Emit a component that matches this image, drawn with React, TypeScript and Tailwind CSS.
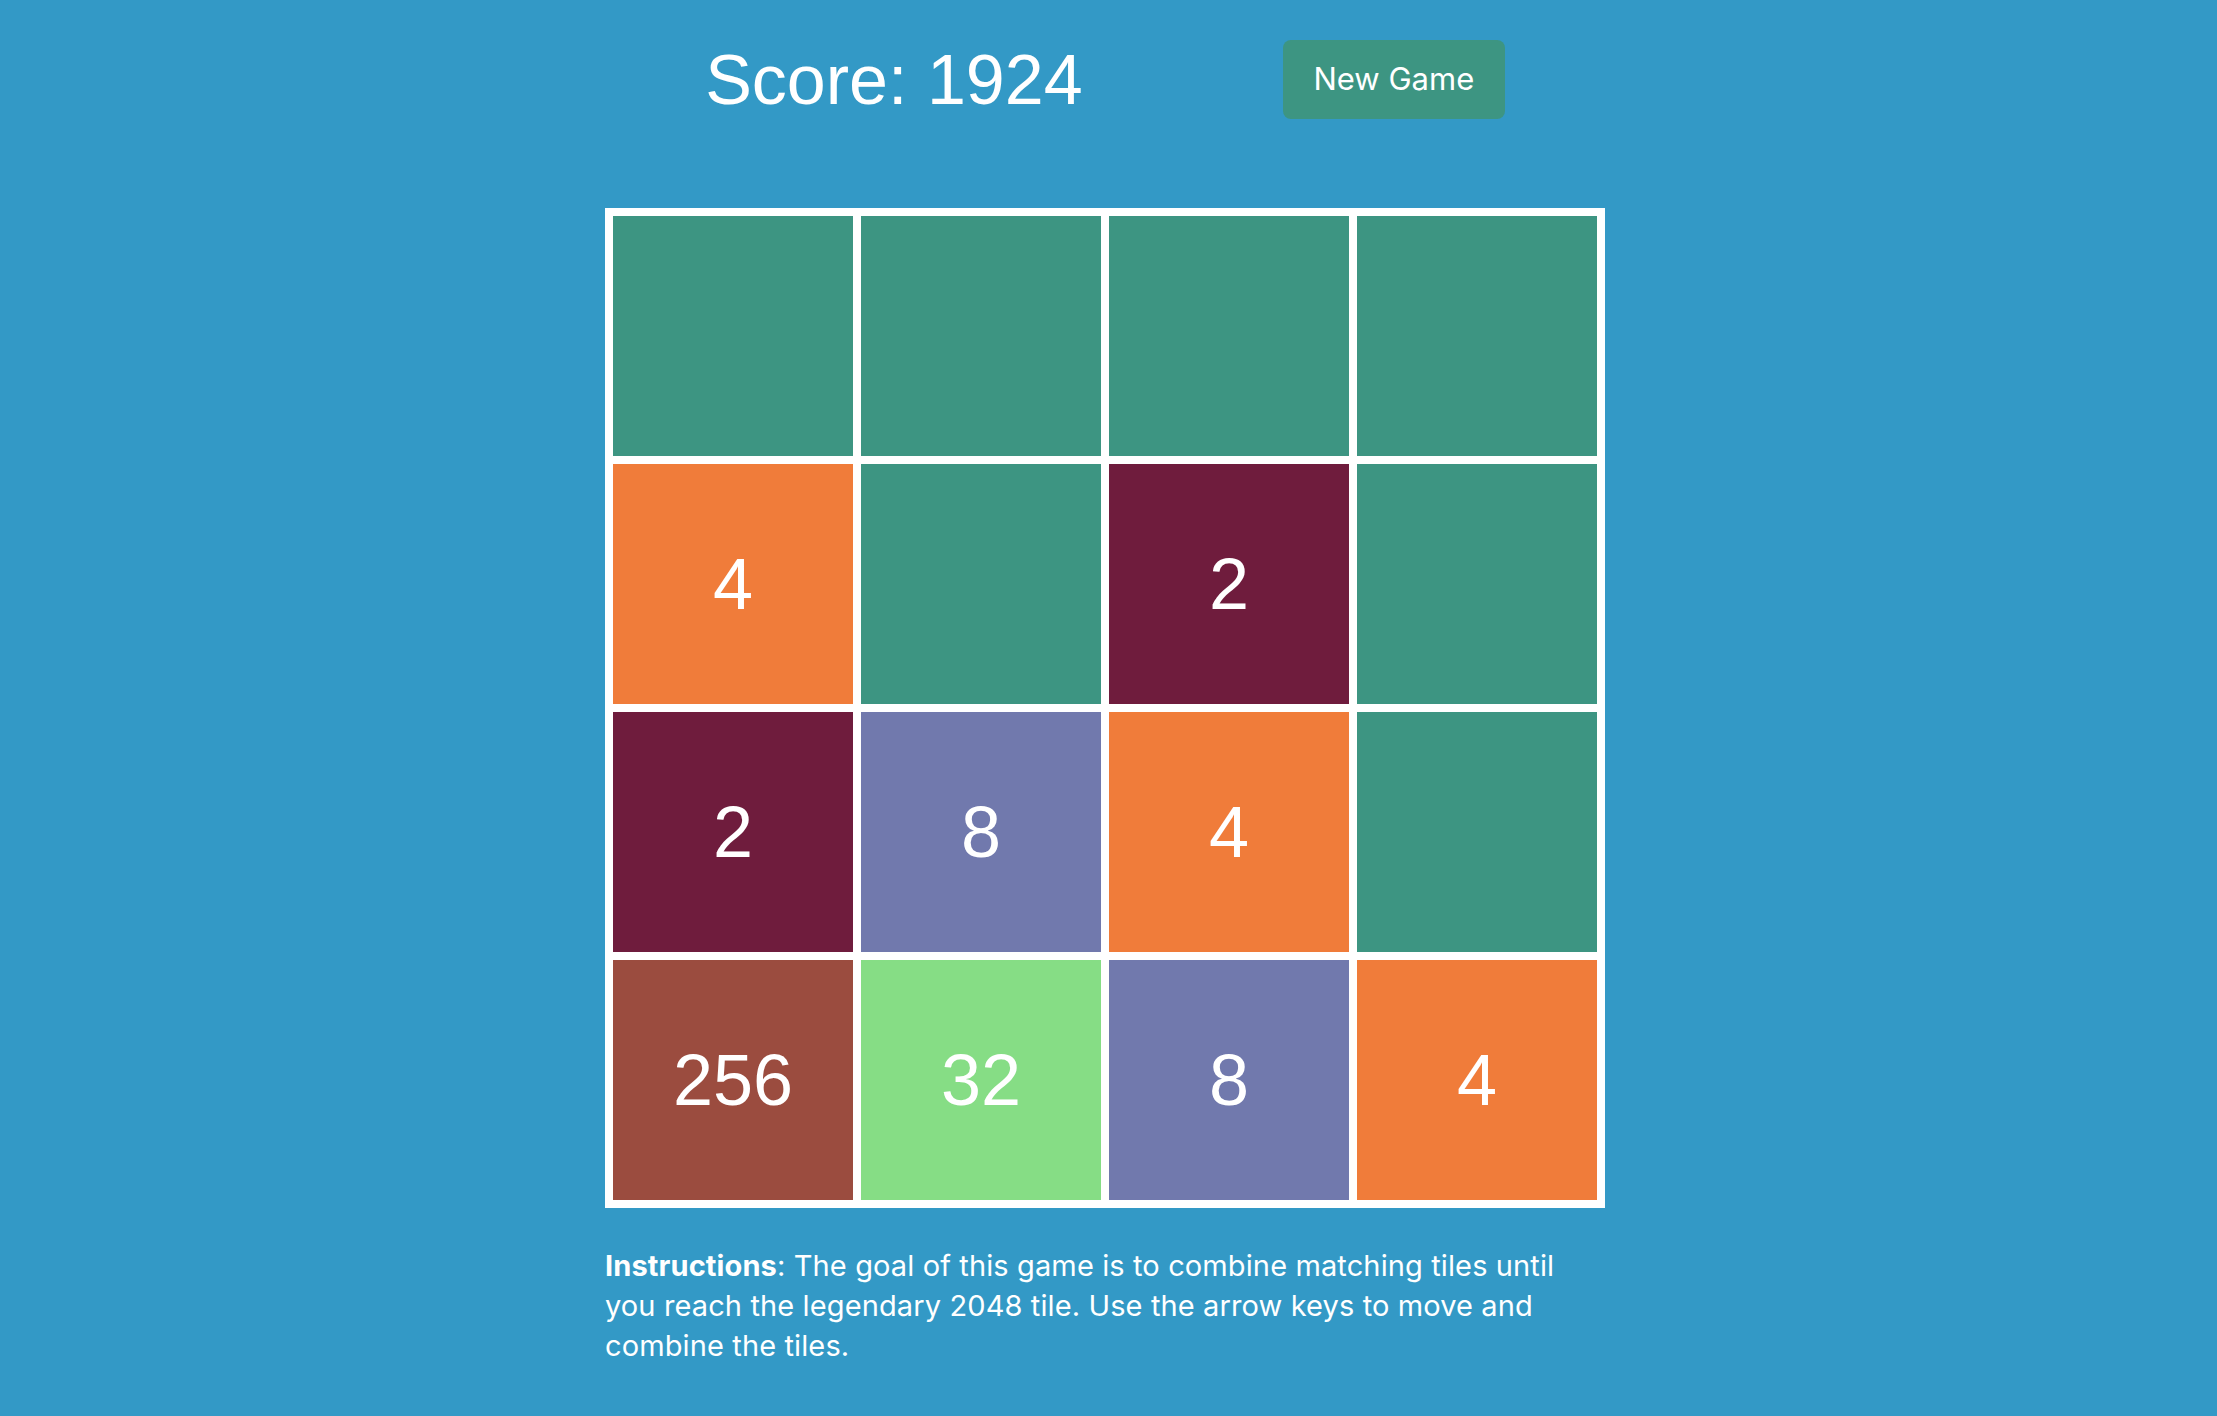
import React from "react";

// tile colours by value, 0 = empty cell
const tileColors: Record<number, string> = {
  0: "bg-[#3d9582]",
  2: "bg-[#6f1c3d]",
  4: "bg-[#f07c3a]",
  8: "bg-[#7179ad]",
  32: "bg-[#86dd85]",
  256: "bg-[#9b4c3f]",
};

const board: number[][] = [
  [0, 0, 0, 0],
  [4, 0, 2, 0],
  [2, 8, 4, 0],
  [256, 32, 8, 4],
];

function Tile({ value }: { value: number }) {
  return (
    <div
      className={`${tileColors[value]} h-[240px] flex items-center justify-center text-white text-[72px] leading-none font-['Liberation_Sans',Arial,sans-serif]`}
    >
      {value > 0 ? value : ""}
    </div>
  );
}

export default function App() {
  const score = 1924;

  return (
    <div className="min-h-screen bg-[#3399c6] flex flex-col items-center pr-[7px] pb-10">
      {/* Header */}
      <div className="w-[1000px] h-[159px] flex justify-around items-center">
        <h1 className="text-white text-[70px] leading-none font-['Liberation_Sans',Arial,sans-serif]">
          Score: {score}
        </h1>
        <button className="w-[222px] h-[79px] rounded-[8px] bg-[#3d9582] text-white text-[31px] font-['Inter',sans-serif] flex items-center justify-center">
          New Game
        </button>
      </div>

      {/* Board */}
      <div className="mt-[49px] w-[1000px] bg-white p-2 grid grid-cols-4 gap-2">
        {board.flat().map((v, i) => (
          <Tile key={i} value={v} />
        ))}
      </div>

      {/* Instructions */}
      <p className="mt-[38px] w-[1000px] text-white text-[29px] leading-[40px] tracking-[0.12px] font-['Inter',sans-serif]">
        <strong className="font-bold">Instructions</strong>: The goal of this
        game is to combine matching tiles until you reach the legendary 2048
        tile. Use the arrow keys to move and combine the tiles.
      </p>
    </div>
  );
}
